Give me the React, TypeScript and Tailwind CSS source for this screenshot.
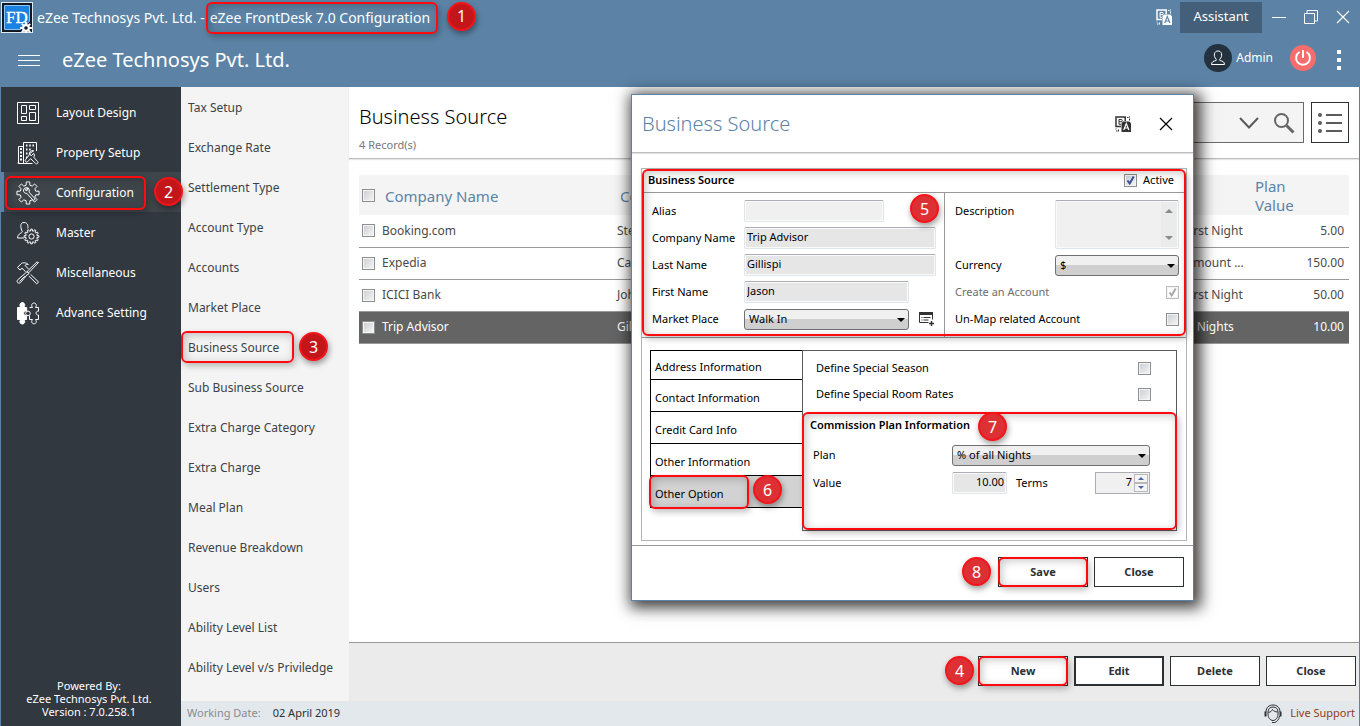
import { useState } from "react";
import type { ReactNode } from "react";
import clsx from "clsx";

/* ---------- Icons ---------- */

function gearPath(cx: number, cy: number, outer: number, inner: number, teeth: number) {
  const step = (Math.PI * 2) / teeth;
  const points: string[] = [];
  for (let i = 0; i < teeth; i++) {
    const a = i * step - Math.PI / 2;
    [
      [inner, -0.3],
      [outer, -0.2],
      [outer, 0.2],
      [inner, 0.3],
    ].forEach(([r, k]) => {
      const x = cx + r * Math.cos(a + k * step);
      const y = cy + r * Math.sin(a + k * step);
      points.push(`${x.toFixed(2)} ${y.toFixed(2)}`);
    });
  }
  return `M${points.join("L")}Z`;
}

const menuSvg = {
  viewBox: "0 0 24 24",
  fill: "none",
  stroke: "currentColor",
  className: "h-6 w-6 shrink-0",
  "aria-hidden": true,
};

const LayoutIcon = () => (
  <svg {...menuSvg}>
    <path d="M1.500 1.500h21v21h-21z" />
    <path d="M5.500 4.500h5v8h-5zM5.500 15.500h5v4h-5zM13.500 4.500h6v4h-6zM13.500 11.500h6v8h-6z" />
  </svg>
);

const PropertyIcon = () => (
  <svg {...menuSvg}>
    <path d="M7 5.5H2.5v17h14M7.500 22V1.500h13V10M3.500 22h-2" />
    <path d="M4 8h2M4 11.500h2M4 15h2M4 18.500h2" strokeWidth="2" />
    <path d="M10 4.500h1.500M13.200 4.500h1.500M16.500 4.500H18M10 8.500h1.500M13.200 8.500h1.500M10 12.500h1.500M10 16.500h1.500" strokeWidth="2.200" />
    <path d="M17.700 9.800a3.300 3.300 0 0 0-4.300 4l-3.900 4.900a1.500 1.500 0 0 0 2.100 2.100l3-3.200 5 4.800a1.300 1.300 0 0 0 2-1.800l-3.800-4.300c1-1.600.6-3.200-.2-4l-1.900 2.200-1.600-.6-.3-1.500z" fill="#31383f" />
  </svg>
);

const ConfigIcon = () => (
  <svg {...menuSvg}>
    <path d={gearPath(12, 12, 11.2, 8, 8)} />
    <path d="M12.400 7.200a3 3 0 0 0-4.700 3.400c.5 1.300 1.800 1.900 3 1.700l6 6.400a1.200 1.200 0 0 0 1.900-1.500l-5.600-6.100c.6-1.300.3-2.900-.6-3.900l-1.200 2.300-1.700-.2-.3-1z" />
  </svg>
);

const MasterIcon = () => (
  <svg {...menuSvg}>
    <path d="M11.800 7.500c.5-2 .1-6-3.700-6S4.700 5 5 7c.1 1.500 1 2.600 1.300 3.600.3 1.500-4.600 1.500-4.800 6.400H8" />
    <path d={gearPath(15.5, 15.5, 7.4, 5.6, 12)} />
    <circle cx="15.500" cy="15.500" r="2.600" />
  </svg>
);

const ToolsIcon = () => (
  <svg {...menuSvg}>
    <path d="M22.500 1.500 12.800 11.700l-1.500-1.400L21 .9zM11 10.700l2 2-2.100 1.300-6.300 7.500c-2 1.800-4.700-.4-2.900-2.700l7.600-6.500zM3.500 20.500l5.300-5.300" />
    <path d="M1.500 6.500 4 9l2-1.800 3.700 3.600M12.500 8 9 4.500c.8-.9 2-1.200 3.400-1C9.800 1.300 6.500 1.300 4.800 3L1.500 6.500M14.600 13.400l8 7.600-1.900 1.800-7.700-7.600" />
  </svg>
);

const PuzzleIcon = () => (
  <svg {...menuSvg}>
    <path d="M1.500 6.500h3.200C3 3.800 4.400 1.500 6.300 1.500S9.700 3.800 8 6.500h2.700v3.600c-4-.6-4 5-.1 4.600v3.800H8c1.700 2.400.3 4.500-1.700 4.500S3 20.900 4.700 18.500H1.500z" fill="currentColor" />
    <path d="M13.500 6.500h3c-1.500-2-.8-4.500 1.500-4.500s3 2.500 1.500 4.500h3v3.700c-3.200-.6-3.200 4.300 0 3.900v4.400h-3c1.500 2 .8 4.300-1.500 4.300s-3-2.300-1.500-4.300h-3v-3.800" />
    <circle cx="12" cy="12.400" r="2.300" />
  </svg>
);

// `cut` is the colour of the letter knocked out of the filled square
function TranslateIcon({ cut }: { cut: string }) {
  return (
    <svg viewBox="0 0 16 16" className="h-4 w-4" fill="none" stroke="currentColor" aria-hidden>
      <path d="M10.200 5V1H1v9.500h5" strokeWidth="1.500" />
      <path d="M4 3.500h2.200a1 1 0 0 1 0 2.200H4zM4 5.700v2.600h2" />
      <path d="M8 5.500h6.300l1.700 1.700V16H6.500V7z" fill="currentColor" stroke="none" />
      <path d="m8.700 14 2.600-6.500 2.600 6.500M9.700 12h3.200" stroke={cut} strokeWidth="1.200" />
      <path d="M12 1.500h1.500M14.500.5v1M14.500 2.500v2M1 12.500v1M1 15h1.500M3.500 13.500v2" />
    </svg>
  );
}

const CloseIcon = () => (
  <svg viewBox="0 0 14 14" className="h-3.5 w-3.5" stroke="currentColor" strokeWidth="1.200" aria-hidden>
    <path d="M1 1l12 12M13 1 1 13" />
  </svg>
);

function LogoIcon() {
  return (
    <svg viewBox="0 0 32 32" className="h-8 w-8 shrink-0" aria-hidden>
      <rect x=".5" y="1.500" width="31" height="30" fill="#111a24" stroke="#dfe9f2" />
      <path d="M3.500 4.500h25v16l-9 8h-16z" fill="#1c82e0" stroke="#8cc4f5" />
      <text x="5" y="22" fontSize="17" fill="#fff" stroke="#fff" strokeWidth=".3" fontFamily="Liberation Serif, serif">FD</text>
      <path d={gearPath(25, 27, 6, 4, 8)} fill="#fff" />
      <circle cx="25" cy="27" r="1.800" fill="#111a24" />
    </svg>
  );
}

/* ---------- Callouts ---------- */

function Mark({ className }: { className: string }) {
  return (
    <span
      className={clsx(
        "pointer-events-none absolute z-10 rounded-md border-2 border-[#ff0a0f] shadow-[2px_3px_6px_rgba(0,0,0,0.25),inset_2px_2px_9px_rgba(0,0,0,0.22)]",
        className
      )}
    />
  );
}

function Step({ n, dark, className }: { n: number; dark?: boolean; className: string }) {
  return (
    <span
      className={clsx(
        "pointer-events-none absolute z-20 flex h-[29px] w-[29px] items-center justify-center rounded-full border-2 border-[#f5141a] text-base leading-none text-white shadow-[1px_3px_6px_rgba(0,0,0,0.4)]",
        dark ? "bg-[#c3161b]" : "bg-[#dd3034]",
        className
      )}
    >
      {n}
    </span>
  );
}

/* ---------- Form controls ---------- */

interface CheckProps {
  id: string;
  label?: string;
  defaultChecked?: boolean;
  disabled?: boolean;
}

function Check({ id, label, defaultChecked, disabled }: CheckProps) {
  return (
    <span className="relative block h-[13px] w-[13px] shrink-0">
      <input
        id={id}
        type="checkbox"
        aria-label={label}
        defaultChecked={defaultChecked}
        disabled={disabled}
        className="peer block h-[13px] w-[13px] appearance-none border border-[#8e8f8f] bg-linear-to-br from-[#c9cdd3] to-[#f6f6f6] shadow-[inset_0_0_0_1px_#f4f4f4] disabled:border-[#bcbcbc] disabled:from-white disabled:to-white"
      />
      <svg
        viewBox="0 0 13 13"
        className="pointer-events-none absolute inset-0 hidden text-[#3d4f95] peer-checked:block peer-disabled:text-[#a8a8a8]"
        fill="none"
        stroke="currentColor"
        strokeWidth="2"
        aria-hidden
      >
        <path d="m3.500 6.500 2.200 3 4-7" />
      </svg>
    </span>
  );
}

function Dropdown({ id, options, className }: { id: string; options: string[]; className: string }) {
  return (
    <span className={clsx("relative block", className)}>
      <select
        id={id}
        className="h-[21px] w-full appearance-none rounded-[3px] border border-[#707070] bg-linear-to-b from-[#f0f0f0] from-50% to-[#cfcfcf] to-50% pl-1 text-[11px] text-black"
      >
        {options.map((o) => (
          <option key={o}>{o}</option>
        ))}
      </select>
      <svg viewBox="0 0 8 4" className="pointer-events-none absolute top-[9px] right-1 h-1 w-2" aria-hidden>
        <path d="M0 0h8L4 4z" />
      </svg>
    </span>
  );
}

function TextField({ id, value, className }: { id: string; value: string; className: string }) {
  return (
    <input
      id={id}
      type="text"
      defaultValue={value}
      className={clsx(
        "h-[22px] rounded-[2px] border border-[#e1e5ec] border-t-[#abadb3] px-0.5 pb-1 text-[11px] text-black shadow-[inset_0_0_0_1px_#fafafa]",
        value ? "bg-[#e6e6e6]" : "bg-[#f0f0f0]",
        className
      )}
    />
  );
}

function ActionButton({ children, strong }: { children: ReactNode; strong?: boolean }) {
  return (
    <button
      type="button"
      className={clsx(
        "h-[30px] w-[90px] border-[#2d3033] bg-white text-[11px] font-bold text-[#2d3033]",
        strong ? "border-2" : "border"
      )}
    >
      {children}
    </button>
  );
}

/* ---------- Data ---------- */

const menu = [
  { label: "Layout Design", icon: <LayoutIcon /> },
  { label: "Property Setup", icon: <PropertyIcon /> },
  { label: "Configuration", icon: <ConfigIcon /> },
  { label: "Master", icon: <MasterIcon /> },
  { label: "Miscellaneous", icon: <ToolsIcon /> },
  { label: "Advance Setting", icon: <PuzzleIcon /> },
];

const subMenu = [
  "Tax Setup",
  "Exchange Rate",
  "Settlement Type",
  "Account Type",
  "Accounts",
  "Market Place",
  "Business Source",
  "Sub Business Source",
  "Extra Charge Category",
  "Extra Charge",
  "Meal Plan",
  "Revenue Breakdown",
  "Users",
  "Ability Level List",
  "Ability Level v/s Priviledge",
];

const rows = [
  { company: "Booking.com", contact: "Steve", plan: "% on First Night", value: "5.00" },
  { company: "Expedia", contact: "Carl", plan: "Fixed Amount ...", value: "150.00" },
  { company: "ICICI Bank", contact: "John", plan: "% on First Night", value: "50.00" },
  { company: "Trip Advisor", contact: "Gill", plan: "% of all Nights", value: "10.00" },
];

const tabs = [
  "Address Information",
  "Contact Information",
  "Credit Card Info",
  "Other Information",
  "Other Option",
];

/* ---------- Sections ---------- */

function Header() {
  return (
    <header className="bg-[#5c83a6] text-white">
      <div className="flex h-[34px] items-center pl-px">
        <LogoIcon />
        <h1 className="flex items-center pt-px text-sm">
          <span className="pl-1 whitespace-nowrap">eZee Technosys Pvt. Ltd. -</span>
          <span className="relative ml-px py-1.5 pr-2 pl-1 leading-5 whitespace-nowrap">
            eZee FrontDesk 7.0 Configuration
            <Mark className="inset-0" />
            <Step n={1} dark className="top-0 -right-[38px]" />
          </span>
        </h1>
        <div className="ml-auto flex items-center">
          <button type="button" aria-label="Language" className="mr-2">
            <TranslateIcon cut="#5c83a6" />
          </button>
          <button type="button" className="h-[31px] w-[82px] bg-[#435f79] text-[13px]">
            Assistant
          </button>
          <button type="button" aria-label="Minimize" className="ml-2.5 h-4 w-3.5">
            <span className="block h-px bg-white" />
          </button>
          <button type="button" aria-label="Restore" className="ml-[18px]">
            <svg viewBox="0 0 14 14" className="h-3.5 w-3.5" fill="none" stroke="currentColor" aria-hidden>
              <path d="M.5 3.500h10v10H.5zM3 3V.5h10.500V11H11" />
            </svg>
          </button>
          <button type="button" aria-label="Close window" className="mr-2.5 ml-[18px]">
            <CloseIcon />
          </button>
        </div>
      </div>

      <div className="flex h-[53px] items-center pl-[18px]">
        <button type="button" aria-label="Menu" className="flex w-[22px] flex-col gap-1">
          <span className="h-px bg-white" />
          <span className="h-px bg-white" />
          <span className="h-px bg-white" />
        </button>
        <p className="pb-0.5 pl-[22px] text-xl">eZee Technosys Pvt. Ltd.</p>
        <div className="mb-1.5 ml-auto flex items-center">
          <span className="flex h-7 w-7 items-center justify-center rounded-full bg-[#243240]">
            <svg viewBox="0 0 16 16" className="h-4 w-4" fill="none" stroke="currentColor" aria-hidden>
              <path d="M6.300 9.300C4.600 7.800 4 5.500 4.500 3.700 5 1.800 6.300 1 8 1s3 .8 3.500 2.700c.5 1.800-.1 4.100-1.800 5.600l.2 1.200c2.500.5 4.600 1.300 4.600 4H1.500c0-2.700 2.100-3.500 4.600-4z" />
            </svg>
          </span>
          <span className="pl-1 text-xs">Admin</span>
          <button
            type="button"
            aria-label="Log out"
            className="ml-[17px] flex h-[26px] w-[26px] items-center justify-center rounded-full bg-[#f76c6c]"
          >
            <svg viewBox="0 0 18 18" className="h-[18px] w-[18px]" fill="none" stroke="currentColor" strokeWidth="2" aria-hidden>
              <path d="M5.500 3a6.900 6.900 0 1 0 7 0M9 1v8" />
            </svg>
          </button>
          <button type="button" aria-label="More" className="mt-1 mr-[19px] ml-[21px] flex flex-col gap-1">
            <span className="h-1 w-1 bg-white" />
            <span className="h-1 w-1 bg-white" />
            <span className="h-1 w-1 bg-white" />
          </button>
        </div>
      </div>
    </header>
  );
}

function Sidebar() {
  return (
    <aside className="flex w-[180px] shrink-0 flex-col bg-[#31383f] pt-[5px] text-white">
      <nav>
        {menu.map(({ label, icon }) => {
          const active = label === "Configuration";
          return (
            <a
              key={label}
              href="#"
              className={clsx(
                "relative flex h-10 items-center gap-4 border-l-[3px] pt-0.5 pl-3 text-xs",
                active ? "border-[#5c83a6] bg-[#3f464b]" : "border-transparent"
              )}
            >
              {icon}
              <span>{label}</span>
              {active && (
                <>
                  <Mark className="top-1 right-[35px] bottom-0.5 left-px" />
                  <Step n={2} dark className="top-[5px] -right-[2px]" />
                </>
              )}
            </a>
          );
        })}
      </nav>
      <p className="mt-auto pr-1 pb-2 text-center text-[11px] leading-[13px]">
        Powered By:
        <br />
        eZee Technosys Pvt. Ltd.
        <br />
        Version : 7.0.258.1
      </p>
    </aside>
  );
}

function SubNav() {
  return (
    <nav className="w-[168px] shrink-0 bg-[#f4f4f4] pb-3.5 text-xs text-[#3c4247]">
      {subMenu.map((label) => (
        <a key={label} href="#" className="relative flex h-10 items-center pt-0.5 pl-[7px] whitespace-nowrap">
          {label}
          {label === "Business Source" && (
            <>
              <Mark className="inset-y-1 right-[55px] left-0" />
              <Step n={3} dark className="top-[5px] right-[21px]" />
            </>
          )}
        </a>
      ))}
    </nav>
  );
}

function SourceTable() {
  return (
    <table className="w-full table-fixed text-left text-xs text-[#4a4a4a]">
      <thead>
        <tr className="h-10 bg-[#f4f4f4] text-[15px] leading-[19px] text-[#5c83a6]">
          <th className="w-[23px] pl-[3px]">
            <Check id="all" label="Select all" />
          </th>
          <th className="w-[235px] pt-0.5 pl-[3px] font-normal">Company Name</th>
          <th className="pt-0.5 pl-[3px] font-normal">Contact</th>
          <th className="w-[102px]" aria-label="Plan" />
          <th className="w-[94px] pt-0.5 pr-10 font-normal">Plan Value</th>
        </tr>
      </thead>
      <tbody>
        {rows.map((r) => (
          <tr
            key={r.company}
            className={clsx(
              "h-8 border-b border-[#999999]",
              r.company === "Trip Advisor" && "bg-[#646464] text-white"
            )}
          >
            <td className="pl-[3px]">
              <Check id={r.company} label={r.company} />
            </td>
            <td>{r.company}</td>
            <td>{r.contact}</td>
            <td className="overflow-hidden whitespace-nowrap">{r.plan}</td>
            <td className="pr-[5px] text-right">{r.value}</td>
          </tr>
        ))}
      </tbody>
    </table>
  );
}

function MainPanel() {
  return (
    <main className="flex min-w-0 flex-1 flex-col bg-white">
      <div className="flex h-[72px] items-center border-b border-[#bdbdbd] pr-[10px] pl-2.5 shadow-[0_1px_1px_rgba(0,0,0,0.1)]">
        <div className="pt-3">
          <h2 className="text-xl leading-7 font-light text-black">Business Source</h2>
          <p className="pt-1 text-[11px] leading-5 text-[#777777]">4 Record(s)</p>
        </div>
        <div className="ml-auto flex h-[41px] w-[360px] items-center border border-[#6b6b6b] bg-[#f4f4f4] pr-2">
          <input type="text" aria-label="Search" className="min-w-0 flex-1 bg-transparent px-2 text-xs" />
          <button type="button" aria-label="Search options" className="mr-3.5 text-[#5a5a5a]">
            <svg viewBox="0 0 20 12" className="h-3 w-5" fill="none" stroke="currentColor" strokeWidth="2" aria-hidden>
              <path d="m1 1 9 9.500L19 1" />
            </svg>
          </button>
          <button type="button" aria-label="Search" className="text-[#666666]">
            <svg viewBox="0 0 22 22" className="h-[22px] w-[22px]" fill="none" stroke="currentColor" strokeWidth="2" aria-hidden>
              <circle cx="8.500" cy="8.500" r="6.500" />
              <path d="m13.500 13.500 7 7" strokeWidth="3" />
            </svg>
          </button>
        </div>
        <button
          type="button"
          aria-label="List view"
          className="ml-[7px] flex h-[41px] w-[38px] shrink-0 items-center justify-center border border-[#2d3033] bg-white text-[#5a5a5a]"
        >
          <svg viewBox="0 0 24 20" className="h-5 w-6" stroke="currentColor" strokeWidth="2" fill="currentColor" aria-hidden>
            <path d="M8 2h16M8 10h16M8 18h16" />
            <circle cx="2" cy="2" r="1" />
            <circle cx="2" cy="10" r="1" />
            <circle cx="2" cy="18" r="1" />
          </svg>
        </button>
      </div>

      <div className="flex-1 px-2.5 pt-4">
        <SourceTable />
      </div>

      <div className="flex h-[59px] items-center justify-end gap-1.5 border-t border-[#999999] bg-[#ebebeb] pr-[3px] pb-0.5">
        <div className="relative">
          <ActionButton>New</ActionButton>
          <Mark className="inset-0" />
          <Step n={4} className="top-0 -left-[33px]" />
        </div>
        <ActionButton strong>Edit</ActionButton>
        <ActionButton>Delete</ActionButton>
        <ActionButton>Close</ActionButton>
      </div>
    </main>
  );
}

function StatusBar() {
  return (
    <footer className="flex h-[25px] items-center bg-[#e3e8ec] pr-1 pl-1.5 text-[11px]">
      <span className="text-[#858c92]">Working Date:</span>
      <span className="pl-3 text-[#2d3033]">02 April 2019</span>
      <a href="#" className="ml-auto flex items-center gap-2 text-[#8f3d1c]">
        <svg viewBox="0 0 18 20" className="h-5 w-[18px] text-[#2d3033]" fill="none" stroke="currentColor" aria-hidden>
          <path d="M2 8C2 3.500 5 1 9 1s7 2.500 7 7M4 8c0-3 2-5 5-5s5 2 5 5v2c0 3.500-2.300 6.500-5 6.500S4 13.500 4 10z" />
          <path d="M4.500 8.500C7 8 8 6.500 8.500 5.500c1 1.500 3 2.500 5 2.500M15.500 12c-.5 3.500-2.500 6-5 6.500H8" />
          <path d="M1.500 7.500v5M16.500 7.500v5" strokeWidth="2" />
        </svg>
        Live Support
      </a>
    </footer>
  );
}

function SourceForm() {
  return (
    <section className="relative border-b border-[#999999]">
      <div className="flex h-6 items-center border-b border-[#999999] pr-3 pl-1.5">
        <h3 className="font-semibold">Business Source</h3>
        <label htmlFor="active" className="ml-auto flex items-center gap-1.5">
          <Check id="active" defaultChecked />
          Active
        </label>
      </div>
      <div className="flex">
        <div className="grid w-[303px] auto-rows-[22px] grid-cols-[92px_1fr] items-center gap-y-[5px] border-r border-[#999999] py-[7px] pl-2.5">
          <label htmlFor="alias">Alias</label>
          <TextField id="alias" value="" className="w-[140px]" />
          <label htmlFor="company">Company Name</label>
          <TextField id="company" value="Trip Advisor" className="w-[192px]" />
          <label htmlFor="last">Last Name</label>
          <TextField id="last" value="Gillispi" className="w-[192px]" />
          <label htmlFor="first">First Name</label>
          <TextField id="first" value="Jason" className="w-[165px]" />
          <label htmlFor="market">Market Place</label>
          <div className="flex items-center gap-2.5">
            <Dropdown id="market" options={["Walk In", "Online"]} className="w-[165px]" />
            <button type="button" aria-label="Add market place">
              <svg viewBox="0 0 15 14" className="h-3.5 w-[15px]" fill="none" stroke="#333" aria-hidden>
                <path d="M9.500 10.500h-9V1h13v6.500" />
                <path d="M0 1.500h14" strokeWidth="3" />
                <path d="M2.500 5.500h1M4.500 5.500h7M2.500 8h1M4.500 8h5" />
                <path d="M12.500 9v5M10 11.500h5" strokeWidth="1.500" />
              </svg>
            </button>
          </div>
        </div>

        <div className="grid flex-1 auto-rows-[22px] grid-cols-[100px_1fr] items-center gap-y-[5px] py-[7px] pr-[7px] pl-2.5">
          <label htmlFor="description">Description</label>
          <div className="relative row-span-2 self-stretch">
            <textarea
              id="description"
              className="block h-full w-full resize-none rounded-[2px] border border-[#e1e5ec] border-t-[#abadb3] bg-[#f0f0f0] shadow-[inset_0_0_0_1px_#fafafa]"
            />
            <span className="pointer-events-none absolute inset-y-0.5 right-0.5 flex w-4 flex-col items-center justify-between bg-[#ebebeb] py-[7px]">
              <svg viewBox="0 0 8 4" className="h-1 w-2" fill="#8a8a8a" aria-hidden>
                <path d="M0 4h8L4 0z" />
              </svg>
              <svg viewBox="0 0 8 4" className="h-1 w-2" fill="#8a8a8a" aria-hidden>
                <path d="M0 0h8L4 4z" />
              </svg>
            </span>
          </div>
          <span />
          <label htmlFor="currency">Currency</label>
          <Dropdown id="currency" options={["$", "€"]} className="w-full" />
          <label htmlFor="create" className="whitespace-nowrap text-[#6d6d6d]">
            Create an Account
          </label>
          <span className="justify-self-end">
            <Check id="create" defaultChecked disabled />
          </span>
          <label htmlFor="unmap" className="whitespace-nowrap">
            Un-Map related Account
          </label>
          <span className="justify-self-end">
            <Check id="unmap" />
          </span>
        </div>
      </div>
      <Mark className="inset-x-0 top-0 bottom-px" />
      <Step n={5} className="top-[25px] left-[268px]" />
    </section>
  );
}

function CommissionPlan() {
  return (
    <section className="relative -mx-px mt-[5px] h-[118px] pt-0.5 pl-2">
      <h3 className="leading-[22px] font-semibold">Commission Plan Information</h3>
      <div className="mt-[9px] flex items-center pl-[3px]">
        <label htmlFor="plan" className="w-[139px]">Plan</label>
        <Dropdown id="plan" options={["% of all Nights", "% on First Night"]} className="w-[198px]" />
      </div>
      <div className="mt-[6px] flex items-center pl-[3px]">
        <label htmlFor="value" className="w-[139px]">Value</label>
        <TextField id="value" value="10.00" className="w-[55px] text-right" />
        <label htmlFor="terms" className="w-[88px] pl-[9px]">Terms</label>
        <div className="flex h-[22px] w-[55px] items-center border border-[#abadb3] bg-[#f0f0f0] pr-px">
          <input id="terms" type="text" inputMode="numeric" defaultValue="7" className="min-w-0 flex-1 bg-transparent pr-0.5 pb-0.5 text-right text-[11px]" />
          <div className="flex flex-col">
            <button type="button" aria-label="Increase" className="flex h-[9px] w-3.5 items-center justify-center border border-[#b9b9b9] bg-[#f4f4f4]">
              <svg viewBox="0 0 6 3" className="h-[3px] w-1.5" fill="#4a62a8" aria-hidden><path d="M0 3h6L3 0z" /></svg>
            </button>
            <button type="button" aria-label="Decrease" className="flex h-[9px] w-3.5 items-center justify-center border border-[#b9b9b9] bg-[#f4f4f4]">
              <svg viewBox="0 0 6 3" className="h-[3px] w-1.5" fill="#4a62a8" aria-hidden><path d="M0 0h6L3 3z" /></svg>
            </button>
          </div>
        </div>
      </div>
      <Mark className="inset-0" />
      <Step n={7} className="top-0 left-44" />
    </section>
  );
}

function BusinessSourceDialog() {
  const [tab, setTab] = useState("Other Option");

  return (
    <div
      role="dialog"
      aria-label="Business Source"
      className="absolute top-[94px] right-[166px] z-30 w-[563px] border border-[#5c83a6] bg-white text-[11px] text-black shadow-[3px_3px_14px_4px_rgba(0,0,0,0.75)]"
    >
      <div className="flex h-[58px] items-center border-b border-[#bdbdbd] pr-5 pl-2.5 shadow-[0_1px_1px_rgba(0,0,0,0.1)]">
        <h2 className="text-xl font-light text-[#5c83a6]">Business Source</h2>
        <button type="button" aria-label="Language" className="ml-auto text-[#333333]">
          <TranslateIcon cut="#fff" />
        </button>
        <button type="button" aria-label="Close dialog" className="ml-7">
          <CloseIcon />
        </button>
      </div>

      <div className="mt-[15px] mr-1.5 mb-1 ml-[9px] border border-[#b4b4b4]">
        <SourceForm />
        <div className="flex items-start pt-3 pr-[9px] pb-[9px] pl-2">
          <div role="tablist" className="w-[152px] shrink-0 border-t border-l border-black">
            {tabs.map((t) => (
              <button
                key={t}
                type="button"
                role="tab"
                aria-selected={t === tab}
                onClick={() => setTab(t)}
                className={clsx(
                  "relative flex w-full items-center border-b border-black pl-1 first:h-[29px] first:pt-1 not-first:h-8 not-first:pt-1.5",
                  t === tab && "bg-[#d2d2d2]"
                )}
              >
                {t}
                {t === "Other Option" && (
                  <>
                    <Mark className="-top-px right-[53px] -bottom-0.5 -left-0.5" />
                    <Step n={6} className="-top-px right-5" />
                  </>
                )}
              </button>
            ))}
          </div>
          <div className="flex-1 border border-[#5a5a5a] pt-1">
            <div className="flex h-[26px] items-center justify-between pr-[25px] pl-[13px]">
              <label htmlFor="season">Define Special Season</label>
              <Check id="season" />
            </div>
            <div className="flex h-[26px] items-center justify-between pr-[25px] pl-[13px]">
              <label htmlFor="rates">Define Special Room Rates</label>
              <Check id="rates" />
            </div>
            <CommissionPlan />
          </div>
        </div>
      </div>

      <div className="flex h-[55px] items-start justify-end gap-1.5 border-t border-[#999999] pt-[11px] pr-[9px]">
        <div className="relative">
          <ActionButton>Save</ActionButton>
          <Mark className="inset-0" />
          <Step n={8} className="top-0 -left-9" />
        </div>
        <ActionButton>Close</ActionButton>
      </div>
    </div>
  );
}

export default function App() {
  return (
    <div className="relative flex min-h-screen flex-col font-['Noto_Sans',sans-serif]">
      <Header />
      <div className="flex flex-1 border-x border-[#5c83a6]">
        <Sidebar />
        <div className="flex min-w-0 flex-1 flex-col">
          <div className="flex flex-1">
            <SubNav />
            <MainPanel />
          </div>
          <StatusBar />
        </div>
      </div>
      <BusinessSourceDialog />
    </div>
  );
}
